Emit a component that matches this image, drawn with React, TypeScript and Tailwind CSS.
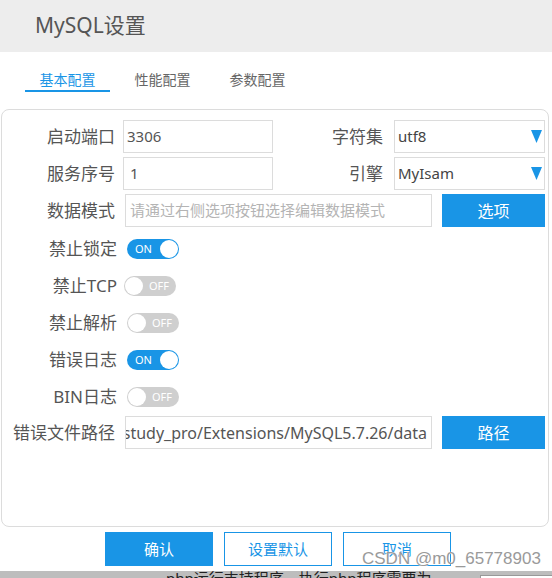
import React from 'react';

const font = "font-['Noto_Sans','Noto_Sans_CJK_SC',sans-serif]";

const Arrow = () => (
  <svg width="11" height="13" viewBox="0 0 11 13" className="shrink-0">
    <polygon points="0,0 11,0 5.5,13" fill="#1995e6" />
  </svg>
);

const Toggle = ({ on, className = '' }: { on: boolean; className?: string }) =>
  on ? (
    <div className={`flex h-[20px] w-[52px] items-center justify-between rounded-full bg-[#1995e6] pl-[8px] pr-[1px] ${className}`}>
      <span className="text-[11px] leading-none text-white">ON</span>
      <span className="h-[18px] w-[18px] rounded-full bg-white" />
    </div>
  ) : (
    <div className={`flex h-[20px] w-[52px] items-center justify-between rounded-full bg-[#cfcfcf] pl-[1px] pr-[7px] ${className}`}>
      <span className="h-[18px] w-[18px] rounded-full bg-white" />
      <span className="text-[11px] leading-none text-white">OFF</span>
    </div>
  );

const Label = ({ children, w = 'w-[113px]' }: { children: React.ReactNode; w?: string }) => (
  <div className={`${w} shrink-0 text-right text-[17px] leading-none text-[#555]`}>{children}</div>
);

const toggles = [
  { label: '禁止锁定', on: true, ml: 'ml-[10px]' },
  { label: '禁止TCP', on: false, ml: 'ml-[7px]' },
  { label: '禁止解析', on: false, ml: 'ml-[10px]' },
  { label: '错误日志', on: true, ml: 'ml-[10px]' },
  { label: 'BIN日志', on: false, ml: 'ml-[10px]' },
];

export default function App() {
  return (
    <div className={`relative flex h-[578px] w-[552px] flex-col overflow-hidden bg-white ${font}`}>
      <div className="flex h-[52px] shrink-0 items-center bg-[#ededed] pl-[35px] text-[21px] text-[#555]">
        MySQL设置
      </div>

      <div className="ml-[25px] mt-[18px] flex gap-[10px] text-[14px]">
        <div className="flex h-[22px] w-[85px] items-start justify-center border-b-2 border-[#1995e6] leading-[20px] text-[#1995e6]">
          基本配置
        </div>
        <div className="flex h-[22px] w-[85px] items-start justify-center leading-[20px] text-[#666]">性能配置</div>
        <div className="flex h-[22px] w-[85px] items-start justify-center leading-[20px] text-[#666]">参数配置</div>
      </div>

      <div className="ml-[1px] mt-[17px] flex h-[418px] w-[548px] shrink-0 flex-col rounded-lg border border-[#dcdcdc] pr-[3px] pt-[10px]">
        <div className="flex h-[33px] items-center">
          <Label>启动端口</Label>
          <div className="ml-[8px] flex h-[33px] w-[150px] items-center border border-[#dcdcdc] pl-[3px] text-[15px] text-[#555]">3306</div>
          <div className="flex-1 text-right text-[17px] leading-none text-[#555]">字符集</div>
          <div className="ml-[11px] flex h-[33px] w-[151px] items-center justify-between border border-[#dcdcdc] pl-[3px] pr-[2px] text-[15px] text-[#444]">
            <span>utf8</span>
            <Arrow />
          </div>
        </div>

        <div className="mt-[4px] flex h-[33px] items-center">
          <Label>服务序号</Label>
          <div className="ml-[8px] flex h-[33px] w-[150px] items-center border border-[#dcdcdc] pl-[6px] text-[15px] text-[#555]">1</div>
          <div className="flex-1 text-right text-[17px] leading-none text-[#555]">引擎</div>
          <div className="ml-[11px] flex h-[33px] w-[151px] items-center justify-between border border-[#dcdcdc] pl-[3px] pr-[2px] text-[15px] text-[#444]">
            <span>MyIsam</span>
            <Arrow />
          </div>
        </div>

        <div className="mt-[4px] flex h-[33px] items-center">
          <Label>数据模式</Label>
          <div className="ml-[10px] flex h-[33px] w-[307px] items-center border border-[#dcdcdc] pl-[4px] text-[15px] text-[#b4b4b4]">
            请通过右侧选项按钮选择编辑数据模式
          </div>
          <button className="ml-[10px] h-[33px] w-[103px] bg-[#1995e6] text-[16px] text-white">选项</button>
        </div>

        <div className="mt-[3px] flex flex-col">
          {toggles.map((t) => (
            <div key={t.label} className="flex h-[37px] items-center">
              <Label w="w-[115px]">{t.label}</Label>
              <Toggle on={t.on} className={t.ml} />
            </div>
          ))}
        </div>

        <div className="mt-[1px] flex h-[33px] items-center">
          <Label>错误文件路径</Label>
          <div className="ml-[10px] flex h-[33px] w-[307px] items-center justify-end overflow-hidden whitespace-nowrap border border-[#dcdcdc] pr-[4px] text-[16px] text-[#555]">
            D:/phpstudy_pro/Extensions/MySQL5.7.26/data
          </div>
          <button className="ml-[10px] h-[33px] w-[103px] bg-[#1995e6] text-[16px] text-white">路径</button>
        </div>
      </div>

      <div className="ml-[105px] mt-[5px] flex gap-[11px] text-[15px]">
        <button className="h-[34px] w-[108px] bg-[#1995e6] text-white">确认</button>
        <button className="h-[34px] w-[108px] border border-[#1995e6] text-[#1995e6]">设置默认</button>
        <button className="h-[34px] w-[108px] border border-[#1995e6] text-[#1995e6]">取消</button>
      </div>

      <div className="relative mt-[5px] h-[20px] shrink-0 bg-[#bdbdbd]">
        <div className="-mt-[3px] whitespace-nowrap pl-[166px] text-[15px] leading-[20px] text-[#222]">
          php运行支持程序，执行php程序需要为
        </div>
        <div className="absolute left-[480px] top-[4px] h-[20px] w-[80px] border border-[#999] bg-white" />
      </div>

      <div className="absolute left-[362px] top-[549px] whitespace-nowrap font-['Liberation_Sans',sans-serif] text-[17px] leading-[20px] text-[#9a9a9a] [text-shadow:0_0_1px_#fff,0_0_1px_#fff]">
        CSDN @m0_65778903
      </div>
    </div>
  );
}
